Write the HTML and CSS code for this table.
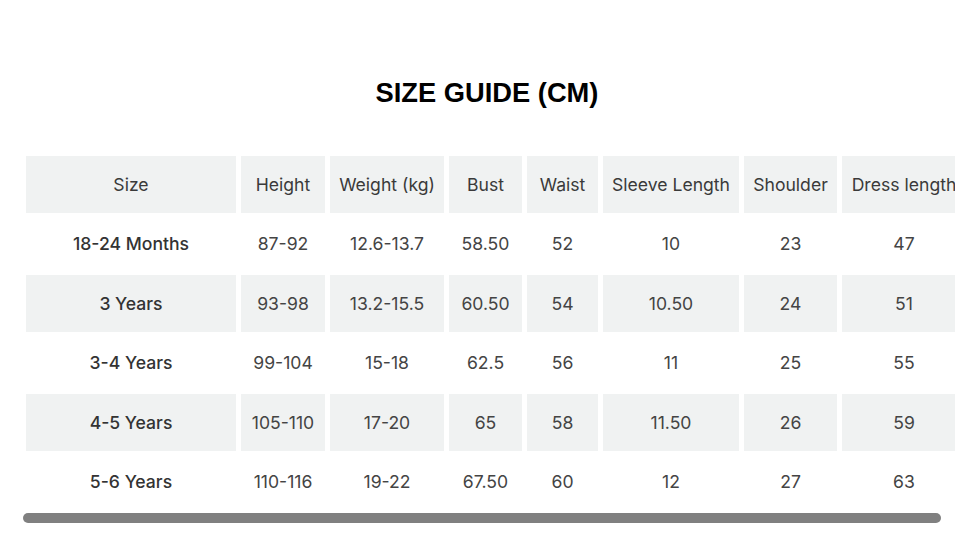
FILE: index.html
```html
<!DOCTYPE html>
<html>
<head>
<meta charset="utf-8">
<link rel="stylesheet" href="styles.css">
</head>
<body>
<div class="page">
  <h1 class="title">SIZE GUIDE (CM)</h1>
  <div class="scroller">
    <table class="guide">
      <colgroup>
        <col class="c1"><col class="c2"><col class="c3"><col class="c4"><col class="c5"><col class="c6"><col class="c7"><col class="c8">
      </colgroup>
      <tr class="shade head">
        <td>Size</td><td>Height</td><td>Weight (kg)</td><td>Bust</td><td>Waist</td><td>Sleeve Length</td><td>Shoulder</td><td>Dress length</td>
      </tr>
      <tr>
        <td class="sz">18-24 Months</td><td>87-92</td><td>12.6-13.7</td><td>58.50</td><td>52</td><td>10</td><td>23</td><td>47</td>
      </tr>
      <tr class="shade">
        <td class="sz">3 Years</td><td>93-98</td><td>13.2-15.5</td><td>60.50</td><td>54</td><td>10.50</td><td>24</td><td>51</td>
      </tr>
      <tr>
        <td class="sz">3-4 Years</td><td>99-104</td><td>15-18</td><td>62.5</td><td>56</td><td>11</td><td>25</td><td>55</td>
      </tr>
      <tr class="shade">
        <td class="sz">4-5 Years</td><td>105-110</td><td>17-20</td><td>65</td><td>58</td><td>11.50</td><td>26</td><td>59</td>
      </tr>
      <tr>
        <td class="sz">5-6 Years</td><td>110-116</td><td>19-22</td><td>67.50</td><td>60</td><td>12</td><td>27</td><td>63</td>
      </tr>
    </table>
  </div>
  <div class="scrollbar"></div>
</div>
</body>
</html>
```

FILE: styles.css
```css
html, body {
  margin: 0;
  padding: 0;
  background: #ffffff;
}
.page {
  width: 980px;
  height: 535px;
  overflow: hidden;
}
.title {
  margin: 0;
  padding: 77px 6px 0 0;
  height: 76px;
  text-align: center;
  font-family: "Liberation Sans", Arial, sans-serif;
  font-weight: bold;
  font-size: 27.3px;
  line-height: 32px;
  color: #000;
  box-sizing: content-box;
}
.scroller {
  margin-left: 21px;
  width: 934px;
  overflow: hidden;
}
.guide {
  border-collapse: separate;
  border-spacing: 5px 3px;
  table-layout: fixed;
  width: 950px;
  font-family: Inter, "Noto Sans", sans-serif;
  font-size: 17.6px;
  color: #444;
}
.c1 { width: 210px; }
.c2 { width: 84px; }
.c3 { width: 114px; }
.c4 { width: 73px; }
.c5 { width: 71px; }
.c6 { width: 136px; }
.c7 { width: 93px; }
.c8 { width: 124px; }
.guide td {
  height: 56.5px;
  padding: 0;
  text-align: center;
  vertical-align: middle;
  white-space: nowrap;
  overflow: visible;
}
.shade td {
  background: #f0f2f2;
}
.head td {
  color: #3a3a3a;
}
.guide td.sz {
  font-weight: 500;
  color: #333;
}
.scrollbar {
  margin-left: 23px;
  width: 918px;
  height: 10px;
  border-radius: 5px;
  background: #808080;
}
```
